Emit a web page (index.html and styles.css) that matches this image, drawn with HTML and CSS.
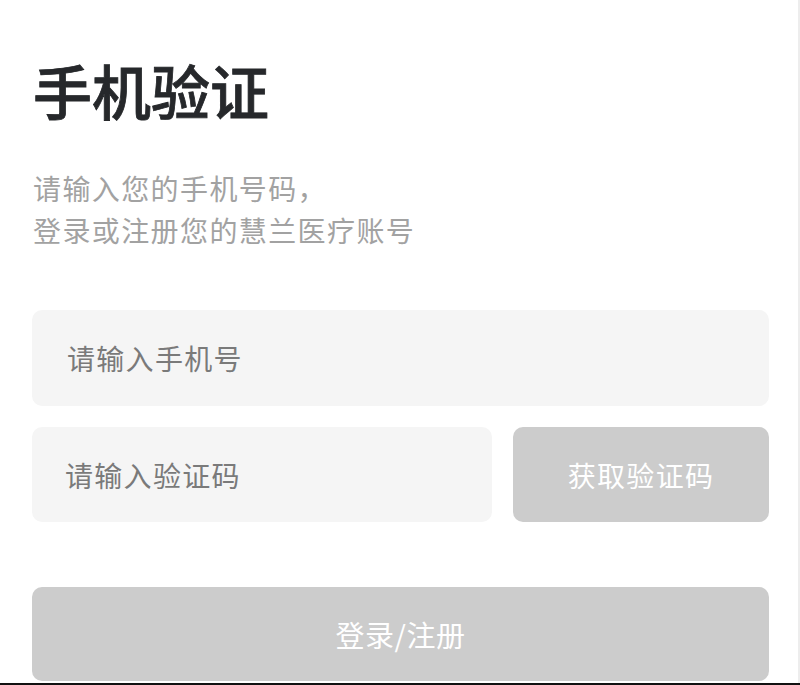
FILE: index.html
```html
<!DOCTYPE html>
<html lang="zh-CN">
<head>
<meta charset="utf-8">
<title>手机验证</title>
<link rel="stylesheet" href="styles.css">
</head>
<body>
<main class="page">
  <h1 class="title">手机验证</h1>
  <p class="subtitle">请输入您的手机号码，<br>登录或注册您的慧兰医疗账号</p>
  <form class="form">
    <div class="field field-full"><span class="placeholder">请输入手机号</span></div>
    <div class="row">
      <div class="field field-code"><span class="placeholder">请输入验证码</span></div>
      <button type="button" class="btn btn-code">获取验证码</button>
    </div>
    <button type="button" class="btn btn-login">登录/注册</button>
  </form>
</main>
</body>
</html>
```
FILE: styles.css
```css
html, body {
  margin: 0;
  padding: 0;
  background: #ffffff;
}
body {
  width: 800px;
  height: 685px;
  overflow: hidden;
  font-family: "Noto Sans CJK SC", "Noto Sans", sans-serif;
  border-bottom: 2px solid #111;
  box-sizing: border-box;
}
.page {
  padding: 0 29px 0 32px;
  height: 683px;
  box-sizing: border-box;
  border-right: 2px solid #ededed;
}
.title {
  margin: 0;
  padding: 54px 0 0 1px;
  font-size: 59px;
  line-height: 71px;
  font-weight: 500;
  color: #26282b;
  letter-spacing: 0;
  -webkit-text-stroke: 0.8px #26282b;
}
.subtitle {
  margin: 42px 0 0 1px;
  font-size: 28px;
  line-height: 42px;
  color: #a2a2a2;
  letter-spacing: 1.4px;
}
.form {
  margin-top: 59px;
  display: flex;
  flex-direction: column;
}
.field {
  background: #f5f5f5;
  border-radius: 10px;
  display: flex;
  align-items: center;
  box-sizing: border-box;
}
.field-full {
  height: 96px;
  padding-left: 35px;
}
.placeholder {
  font-size: 28px;
  color: #7a7a7a;
  letter-spacing: 1.3px;
}
.row {
  margin-top: 21px;
  display: flex;
  gap: 21px;
  height: 95px;
}
.field-code {
  width: 460px;
  padding-left: 33px;
}
.btn {
  border: 0;
  margin: 0;
  padding: 0;
  background: #cccccc;
  color: #ffffff;
  font-family: inherit;
  font-size: 28px;
  letter-spacing: 1.3px;
  border-radius: 10px;
  cursor: pointer;
}
.btn-code {
  flex: 1;
}
.btn-login {
  margin-top: 65px;
  height: 94px;
  font-size: 29px;
  letter-spacing: 0.5px;
}
```
